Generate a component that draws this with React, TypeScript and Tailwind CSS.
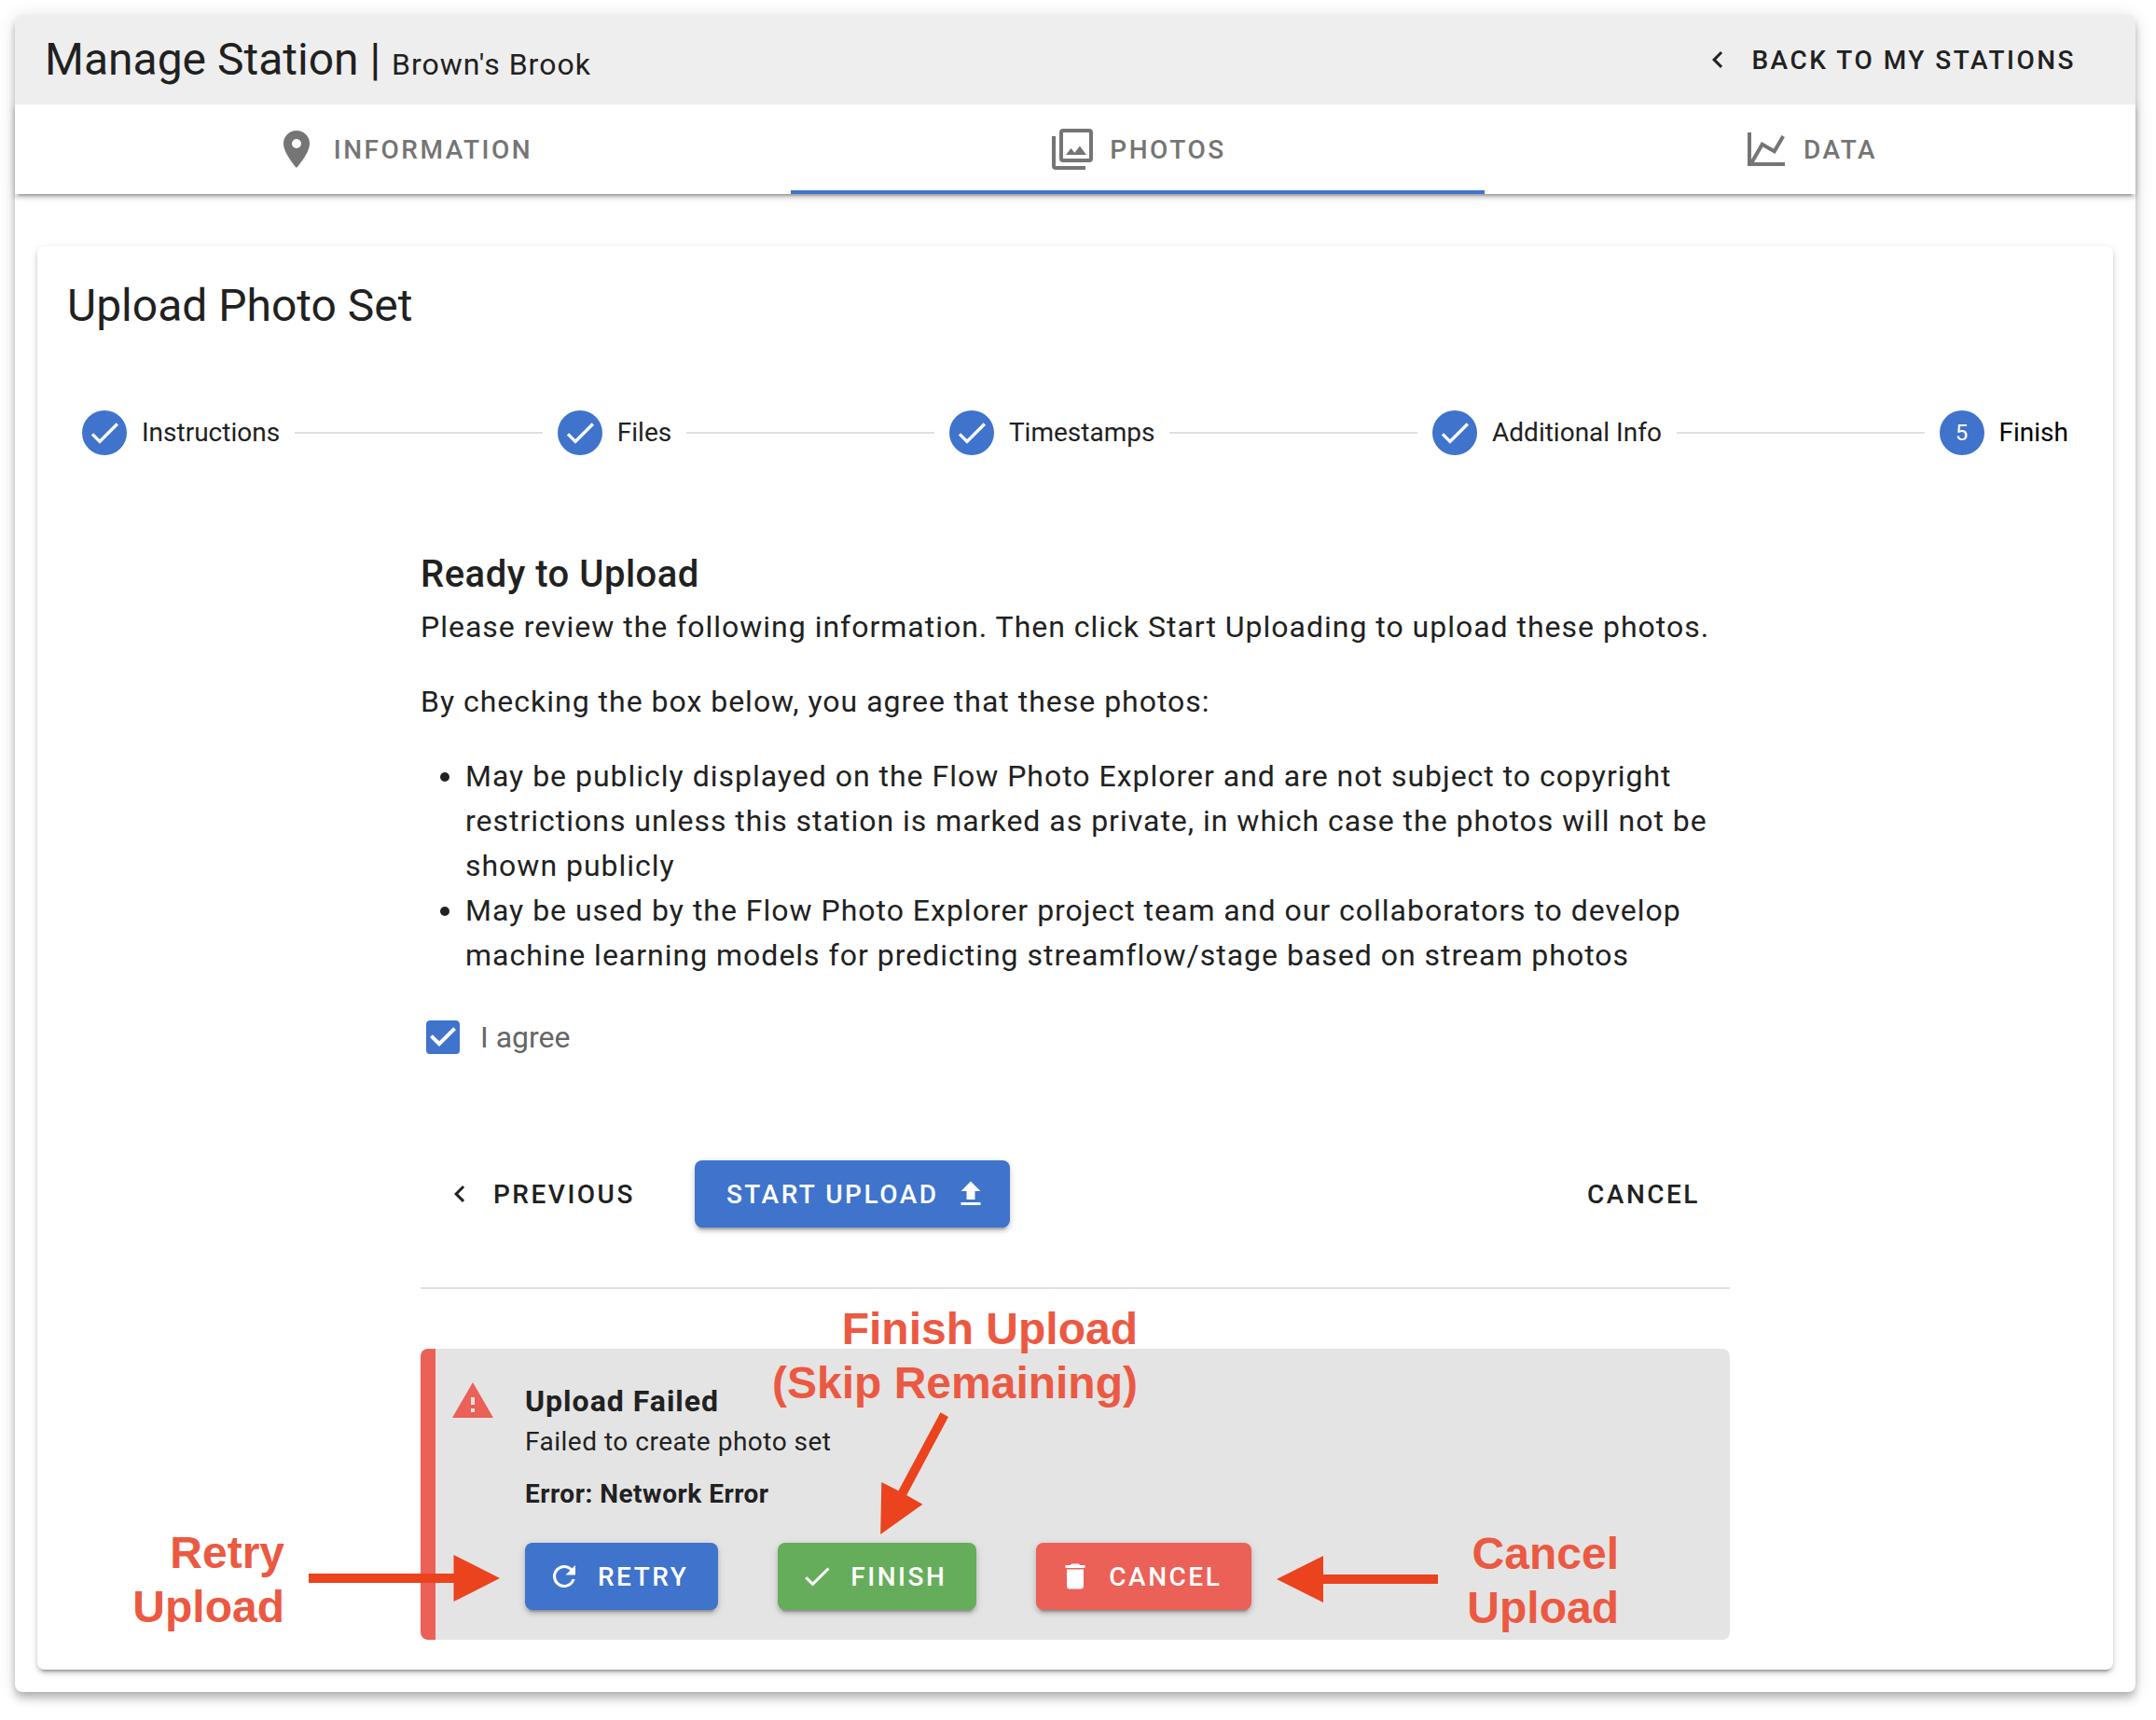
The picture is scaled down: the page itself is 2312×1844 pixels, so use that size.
import type { ReactNode } from "react";

const paths = {
  chevronLeft: "M15.41,16.58L10.83,12L15.41,7.41L14,6L8,12L14,18L15.41,16.58Z",
  mapMarker:
    "M12,11.5A2.5,2.5 0 0,1 9.5,9A2.5,2.5 0 0,1 12,6.5A2.5,2.5 0 0,1 14.5,9A2.5,2.5 0 0,1 12,11.5M12,2A7,7 0 0,0 5,9C5,14.25 12,22 12,22C12,22 19,14.25 19,9A7,7 0 0,0 12,2Z",
  images:
    "M21,17H7V3H21M21,1H7A2,2 0 0,0 5,3V17A2,2 0 0,0 7,19H21A2,2 0 0,0 23,17V3A2,2 0 0,0 21,1M3,5H1V21A2,2 0 0,0 3,23H19V21H3M15.96,10.29L13.21,13.83L11.25,11.47L8.5,15H19.5L15.96,10.29Z",
  chart:
    "M16,11.78L20.24,4.45L21.97,5.45L16.74,14.5L10.23,10.75L5.46,19H22V21H2V3H4V17.54L9.5,8L16,11.78Z",
  check: "M21,7L9,19L3.5,13.5L4.91,12.09L9,16.17L19.59,5.59L21,7Z",
  checkbox:
    "M10,17L5,12L6.41,10.58L10,14.17L17.59,6.58L19,8M19,3H5C3.89,3 3,3.89 3,5V19A2,2 0 0,0 5,21H19A2,2 0 0,0 21,19V5C21,3.89 20.1,3 19,3Z",
  upload: "M9,16V10H5L12,3L19,10H15V16H9M5,20V18H19V20H5Z",
  alert: "M13,14H11V10H13M13,18H11V16H13M1,21H23L12,2L1,21Z",
  refresh:
    "M17.65,6.35C16.2,4.9 14.21,4 12,4A8,8 0 0,0 4,12A8,8 0 0,0 12,20C15.73,20 18.84,17.45 19.73,14H17.65C16.83,16.33 14.61,18 12,18A6,6 0 0,1 6,12A6,6 0 0,1 12,6C13.66,6 15.14,6.69 16.22,7.78L13,11H20V4L17.65,6.35Z",
  trash:
    "M19,4H15.5L14.5,3H9.5L8.5,4H5V6H19M6,19A2,2 0 0,0 8,21H16A2,2 0 0,0 18,19V7H6V19Z",
};

function Icon({ name, className }: { name: keyof typeof paths; className: string }) {
  return (
    <svg viewBox="0 0 24 24" fill="currentColor" className={`shrink-0 ${className}`}>
      <path d={paths[name]} />
    </svg>
  );
}

function Button({
  children,
  left,
  right,
  className = "",
}: {
  children: ReactNode;
  left?: keyof typeof paths;
  right?: keyof typeof paths;
  className?: string;
}) {
  return (
    <button
      className={`flex h-[72px] items-center whitespace-nowrap rounded-lg pr-8 text-[28px] font-medium uppercase tracking-[2.5px] ${
        right ? "pl-[34px]" : "pl-8"
      } ${className}`}
    >
      {left && <Icon name={left} className="-ml-2 mr-[18px] size-9" />}
      <span className="pt-0.5">{children}</span>
      {right && <Icon name={right} className="-mr-2 ml-4 size-9" />}
    </button>
  );
}

const raised =
  "text-white shadow-[0_6px_2px_-4px_rgba(0,0,0,0.2),0_4px_4px_0_rgba(0,0,0,0.14),0_2px_10px_0_rgba(0,0,0,0.12)]";

function Tab({ icon, label, active }: { icon: keyof typeof paths; label: string; active?: boolean }) {
  return (
    <div
      className={`relative flex items-center justify-center pl-px text-[28px] font-medium uppercase tracking-[2.5px] text-[#757575] ${
        active ? "after:absolute after:inset-x-0 after:bottom-0 after:h-1 after:bg-[#3f73cc]" : ""
      }`}
    >
      <Icon name={icon} className="mr-4 size-12" />
      <span className="pt-0.5">{label}</span>
    </div>
  );
}

const steps = ["Instructions", "Files", "Timestamps", "Additional Info", "Finish"];

function Stepper() {
  return (
    <div className="mx-4 flex h-12 items-center gap-4 text-[28px] leading-none">
      {steps.map((step, i) => {
        const last = i === steps.length - 1;
        return (
          <div key={step} className={`flex items-center gap-4 ${last ? "" : "flex-1 basis-auto"}`}>
            <div className="flex size-12 shrink-0 items-center justify-center rounded-full bg-[#3f73cc] text-2xl text-white">
              {last ? i + 1 : <Icon name="check" className="size-10" />}
            </div>
            <span className={`whitespace-nowrap ${last ? "text-black" : ""}`}>{step}</span>
            {!last && <div className="h-0.5 flex-1 bg-[#e0e0e0]" />}
          </div>
        );
      })}
    </div>
  );
}

const note =
  "absolute whitespace-nowrap text-right font-['Liberation_Sans',Helvetica,Arial,sans-serif] text-[48px] font-bold leading-[58px] text-[#eb5942]";

function Annotations() {
  return (
    <>
      <div className={`${note} right-[1092px] top-[1396px]`}>
        Finish Upload
        <br />
        (Skip Remaining)
      </div>
      <div className={`${note} right-[2007px] top-[1636px]`}>
        Retry
        <br />
        Upload
      </div>
      <div className={`${note} right-[576px] top-[1637px]`}>
        Cancel
        <br />
        Upload
      </div>
      <svg viewBox="331 1667 205 50" className="absolute left-[331px] top-[1667px] h-[50px] w-[205px] fill-[#ea431e]">
        <path d="M331 1687H486.500V1667L536 1692L486.500 1717V1697H331Z" />
      </svg>
      <svg viewBox="1369 1668 173 50" className="absolute left-[1369px] top-[1668px] h-[50px] w-[173px] fill-[#ea431e]">
        <path d="M1542 1688H1419V1668L1369 1693L1419 1718V1698H1542Z" />
      </svg>
      <svg viewBox="940 1510 80 140" className="absolute left-[940px] top-[1510px] h-[140px] w-[80px] fill-[#ea431e]">
        <path d="M1008.500 1514.300L1017 1519L972.200 1603L989.400 1612.700L944.200 1645L945.300 1589L963.500 1598.300Z" />
      </svg>
    </>
  );
}

export default function App() {
  return (
    <div className="relative h-[1844px] w-[2312px] overflow-hidden bg-white pl-4 pt-4 font-[Roboto,sans-serif] text-[#212121]">
      <div className="flex h-[1798px] w-[2274px] flex-col rounded-lg bg-white shadow-[0_4px_8px_-2px_rgba(0,0,0,0.2),0_8px_10px_0_rgba(0,0,0,0.14),0_2px_20px_0_rgba(0,0,0,0.12)]">
        <header className="relative z-10 flex h-24 shrink-0 items-center justify-between rounded-t-lg bg-[#eeeeee] px-8">
          <h1 className="whitespace-pre text-[48px] leading-[64px]">
            Manage Station | <span className="text-[32px] leading-none tracking-[1px]">Brown's Brook</span>
          </h1>
          <Button left="chevronLeft">Back to My Stations</Button>
        </header>

        <nav className="grid h-24 shrink-0 grid-cols-[832px_744px_698px] bg-white shadow-[0_6px_2px_-4px_rgba(0,0,0,0.2),0_4px_4px_0_rgba(0,0,0,0.14),0_2px_10px_0_rgba(0,0,0,0.12)]">
          <Tab icon="mapMarker" label="Information" />
          <Tab icon="images" label="Photos" active />
          <Tab icon="chart" label="Data" />
        </nav>

        <main className="mx-6 mt-14 h-[1526px] rounded-lg bg-white px-8 pt-8 shadow-[0_6px_2px_-4px_rgba(0,0,0,0.2),0_4px_4px_0_rgba(0,0,0,0.14),0_2px_10px_0_rgba(0,0,0,0.12)]">
          <h2 className="mb-20 text-[48px] leading-[64px]">Upload Photo Set</h2>
          <Stepper />

          <section className="mx-auto mt-24 w-[1404px] text-[32px] leading-[48px] tracking-[0.99px]">
            <h3 className="text-[40px] font-medium leading-[64px] tracking-[0.5px]">Ready to Upload</h3>
            <p className="mb-8">
              Please review the following information. Then click Start Uploading to upload these photos.
            </p>
            <p className="mb-8">By checking the box below, you agree that these photos:</p>
            <ul className="list-disc pl-12">
              <li>
                May be publicly displayed on the Flow Photo Explorer and are not subject to copyright restrictions
                unless this station is marked as private, in which case the photos will not be shown publicly
              </li>
              <li>
                May be used by the Flow Photo Explorer project team and our collaborators to develop machine learning
                models for predicting streamflow/stage based on stream photos
              </li>
            </ul>

            <label className="mt-10 flex items-center gap-4 tracking-normal text-[#666666]">
              <Icon name="checkbox" className="size-12 text-[#3f73cc]" />
              I agree
            </label>

            <div className="mt-[108px] flex">
              <Button left="chevronLeft">Previous</Button>
              <Button right="upload" className={`ml-8 bg-[#3f73cc] ${raised}`}>
                Start Upload
              </Button>
              <Button className="ml-auto">Cancel</Button>
            </div>

            <hr className="my-16 h-0.5 border-0 bg-[#e0e0e0]" />

            <div className="flex h-[312px] rounded-lg border-l-[16px] border-[#eb6057] bg-[#e4e4e4] pl-4 pt-8">
              <Icon name="alert" className="mr-8 size-12 text-[#eb6057]" />
              <div className="text-[28px] leading-10 tracking-[0.5px]">
                <h4 className="text-[32px] font-bold leading-[48px] tracking-[1px]">Upload Failed</h4>
                <p>Failed to create photo set</p>
                <p className="mt-4 font-bold">Error: Network Error</p>
                <div className="mt-8 flex gap-16">
                  <Button left="refresh" className={`bg-[#3f73cc] ${raised}`}>
                    Retry
                  </Button>
                  <Button left="check" className={`bg-[#66ad5b] ${raised}`}>
                    Finish
                  </Button>
                  <Button left="trash" className={`bg-[#eb6057] ${raised}`}>
                    Cancel
                  </Button>
                </div>
              </div>
            </div>
          </section>
        </main>
      </div>
      <Annotations />
    </div>
  );
}
